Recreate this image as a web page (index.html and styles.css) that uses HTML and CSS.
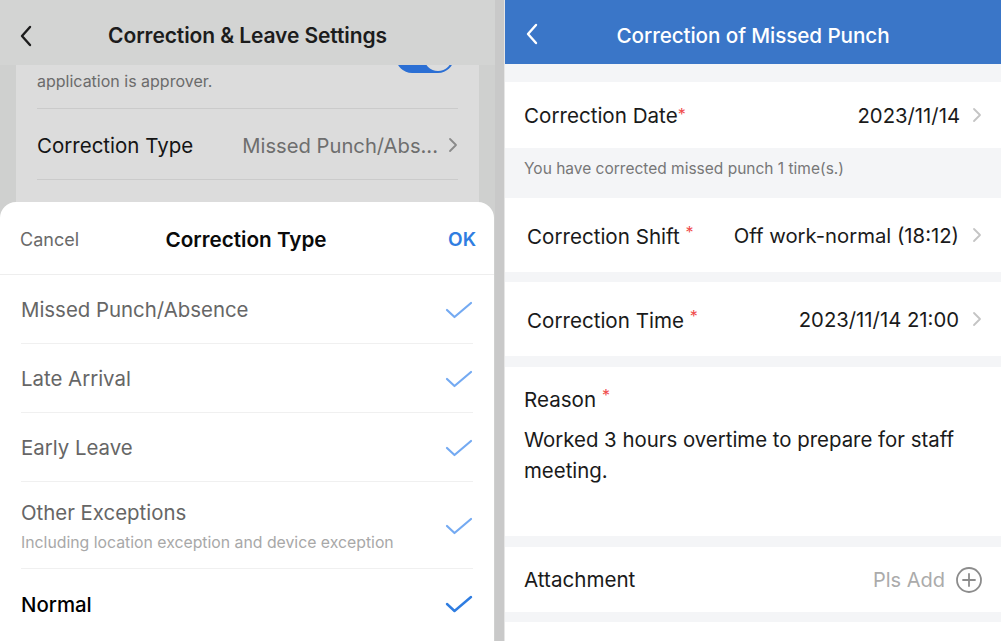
FILE: index.html
```html
<!DOCTYPE html>
<html lang="en">
<head>
  <meta charset="UTF-8">
  <meta name="viewport" content="width=device-width, initial-scale=1.0">
  <title>Correction of Missed Punch</title>
  <link rel="stylesheet" href="styles.css">
</head>
<body>
  <div class="screen settings-screen">
    <div class="nav-bar dim">
      <svg class="nav-back" width="14" height="22" viewBox="0 0 14 22"><path d="M11 2 L3 11 L11 20" fill="none" stroke="#1c1c1c" stroke-width="2.4" stroke-linecap="round" stroke-linejoin="round"/></svg>
      <div class="nav-title">Correction &amp; Leave Settings</div>
    </div>

    <div class="settings-body">
      <div class="settings-card">
        <div class="setting-row switch-row">
          <div class="setting-desc">
            <div class="desc-scrolled"></div>
            <div>application is approver.</div>
          </div>
          <div class="switch"><div class="switch-knob"></div></div>
        </div>
        <div class="setting-row link-row">
          <div class="setting-label">Correction Type</div>
          <div class="setting-value">Missed Punch/Abs...</div>
          <svg class="chevron" width="10" height="16" viewBox="0 0 10 16"><path d="M2 2 L8 8 L2 14" fill="none" stroke="#8a8a8a" stroke-width="1.8" stroke-linecap="round" stroke-linejoin="round"/></svg>
        </div>
        <div class="setting-row link-row"></div>
      </div>
    </div>

    <div class="sheet">
      <div class="sheet-head">
        <div class="sheet-cancel">Cancel</div>
        <div class="sheet-title">Correction Type</div>
        <div class="sheet-ok">OK</div>
      </div>
      <div class="option">
        <div class="option-text">Missed Punch/Absence</div>
        <svg class="check" width="28" height="18" viewBox="0 0 28 18"><path d="M2 9 L9.5 16 L26 2" fill="none" stroke="#74aaf2" stroke-width="2.2" stroke-linecap="round" stroke-linejoin="round"/></svg>
      </div>
      <div class="option">
        <div class="option-text">Late Arrival</div>
        <svg class="check" width="28" height="18" viewBox="0 0 28 18"><path d="M2 9 L9.5 16 L26 2" fill="none" stroke="#74aaf2" stroke-width="2.2" stroke-linecap="round" stroke-linejoin="round"/></svg>
      </div>
      <div class="option">
        <div class="option-text">Early Leave</div>
        <svg class="check" width="28" height="18" viewBox="0 0 28 18"><path d="M2 9 L9.5 16 L26 2" fill="none" stroke="#74aaf2" stroke-width="2.2" stroke-linecap="round" stroke-linejoin="round"/></svg>
      </div>
      <div class="option option-tall">
        <div class="option-text">
          <div>Other Exceptions</div>
          <div class="option-sub">Including location exception and device exception</div>
        </div>
        <svg class="check" width="28" height="18" viewBox="0 0 28 18"><path d="M2 9 L9.5 16 L26 2" fill="none" stroke="#74aaf2" stroke-width="2.2" stroke-linecap="round" stroke-linejoin="round"/></svg>
      </div>
      <div class="option option-last">
        <div class="option-text selected">Normal</div>
        <svg class="check" width="28" height="18" viewBox="0 0 28 18"><path d="M2 9 L9.5 16 L26 2" fill="none" stroke="#2f7de1" stroke-width="2.4" stroke-linecap="round" stroke-linejoin="round"/></svg>
      </div>
    </div>
  </div>

  <div class="gutter"></div>

  <div class="screen form-screen">
    <div class="nav-bar blue">
      <svg class="nav-back" width="14" height="22" viewBox="0 0 14 22"><path d="M11 2 L3 11 L11 20" fill="none" stroke="#ffffff" stroke-width="2.4" stroke-linecap="round" stroke-linejoin="round"/></svg>
      <div class="nav-title">Correction of Missed Punch</div>
    </div>

    <div class="form-row date-row">
      <div class="form-label">Correction Date<span class="req tight">*</span></div>
      <div class="form-value">2023/11/14</div>
      <svg class="chevron" width="10" height="16" viewBox="0 0 10 16"><path d="M2 2 L8 8 L2 14" fill="none" stroke="#c4c4c4" stroke-width="1.8" stroke-linecap="round" stroke-linejoin="round"/></svg>
    </div>
    <div class="form-note">You have corrected missed punch 1 time(s.)</div>

    <div class="form-row wide-row">
      <div class="form-label">Correction Shift <span class="req">*</span></div>
      <div class="form-value">Off work-normal (18:12)</div>
      <svg class="chevron" width="10" height="16" viewBox="0 0 10 16"><path d="M2 2 L8 8 L2 14" fill="none" stroke="#c4c4c4" stroke-width="1.8" stroke-linecap="round" stroke-linejoin="round"/></svg>
    </div>

    <div class="form-row wide-row gap-top">
      <div class="form-label">Correction Time <span class="req">*</span></div>
      <div class="form-value">2023/11/14 21:00</div>
      <svg class="chevron" width="10" height="16" viewBox="0 0 10 16"><path d="M2 2 L8 8 L2 14" fill="none" stroke="#c4c4c4" stroke-width="1.8" stroke-linecap="round" stroke-linejoin="round"/></svg>
    </div>

    <div class="reason-block">
      <div class="form-label">Reason <span class="req">*</span></div>
      <div class="reason-text">Worked 3 hours overtime to prepare for staff meeting.</div>
    </div>

    <div class="form-row attach-row">
      <div class="form-label">Attachment</div>
      <div class="form-placeholder">Pls Add</div>
      <svg class="plus" width="28" height="28" viewBox="0 0 28 28"><circle cx="14" cy="14" r="12" fill="none" stroke="#8c8c8c" stroke-width="1.8"/><path d="M14 8 V20 M8 14 H20" stroke="#8c8c8c" stroke-width="1.8" stroke-linecap="round"/></svg>
    </div>

    <div class="form-rest"></div>
  </div>
</body>
</html>
```

FILE: styles.css
```css
* {
  margin: 0;
  padding: 0;
  box-sizing: border-box;
  font-family: 'Inter', 'Noto Sans', sans-serif;
}

body {
  width: 1001px;
  height: 641px;
  overflow: hidden;
  display: flex;
  background: #ffffff;
}

.screen {
  height: 641px;
  display: flex;
  flex-direction: column;
  position: relative;
  overflow: hidden;
}

.settings-screen {
  width: 495px;
  background: #cfd0cf;
}

.gutter {
  width: 10px;
  background: #c9c9c9;
  border-right: 1px solid #e6e6e6;
}

.form-screen {
  flex: 1;
  background: #f4f5f7;
}

/* nav bars */
.nav-bar {
  height: 65px;
  flex-shrink: 0;
  display: flex;
  align-items: center;
  justify-content: center;
  padding-top: 6px;
  position: relative;
  z-index: 2;
}

.nav-bar.dim {
  background: #d3d4d3;
}

.nav-bar.blue {
  height: 64px;
  padding-top: 7px;
  background: #3a76c8;
}

.nav-back {
  position: absolute;
  left: 19px;
  top: 25px;
}

.nav-bar.blue .nav-back {
  left: 20px;
  top: 23px;
}

.nav-title {
  font-size: 21px;
  font-weight: 600;
  color: #1c1c1c;
  letter-spacing: -0.1px;
}

.nav-bar.blue .nav-title {
  font-weight: 500;
  color: #ffffff;
  font-size: 20.7px;
}

/* dimmed settings page, scrolled so the first line sits under the bar */
.settings-body {
  flex: 1;
  padding: 0 16px;
  overflow: hidden;
}

.settings-card {
  background: #dcdcdc;
  padding: 0 21px;
  margin-top: -27px;
}

.setting-row {
  display: flex;
  align-items: center;
  border-bottom: 1px solid #cbcbcb;
}

.switch-row {
  height: 71px;
  align-items: flex-start;
  padding-top: 4px;
}

.setting-desc {
  flex: 1;
  font-size: 16px;
  line-height: 26px;
  color: #6b6b6b;
}

.desc-scrolled {
  height: 26px;
}

.switch {
  width: 58px;
  height: 32px;
  margin-top: -1px;
  margin-right: 4px;
  border-radius: 16px;
  background: #2b6fd4;
  position: relative;
}

.switch-knob {
  position: absolute;
  right: 2px;
  top: 2px;
  width: 28px;
  height: 28px;
  border-radius: 50%;
  background: #dcdcdc;
}

.link-row {
  height: 71px;
  padding-top: 2px;
}

.setting-label {
  flex: 1;
  font-size: 20.5px;
  color: #141414;
}

.setting-value {
  font-size: 20.2px;
  color: #6e6e6e;
  margin-right: 10px;
}

/* bottom sheet */
.sheet {
  position: absolute;
  left: 0;
  top: 202px;
  width: 494px;
  bottom: 0;
  background: #ffffff;
  border-radius: 16px 16px 0 0;
  z-index: 3;
}

.sheet-head {
  height: 73px;
  display: flex;
  align-items: center;
  justify-content: space-between;
  padding: 2px 18px 0 20px;
  border-bottom: 1px solid #eeeeee;
}

.sheet-cancel {
  width: 80px;
  font-size: 18px;
  color: #6a6a6a;
}

.sheet-title {
  font-size: 20.7px;
  font-weight: 600;
  color: #0a0a0a;
  margin-left: -4px;
}

.sheet-ok {
  width: 80px;
  text-align: right;
  font-size: 19px;
  font-weight: 600;
  color: #2f7de1;
}

.option {
  height: 69px;
  margin: 0 21px;
  padding-top: 1px;
  display: flex;
  align-items: center;
  justify-content: space-between;
  border-bottom: 1px solid #f0f0f0;
}

.option-tall {
  height: 87px;
}

.option-last {
  border-bottom: none;
  padding-top: 0;
  height: 70px;
}

.option-text {
  font-size: 20.4px;
  color: #666666;
}

.option-text.selected {
  color: #000000;
  font-weight: 500;
}

.option-sub {
  font-size: 15.8px;
  color: #a8a8a8;
  margin-top: 8px;
}

/* form page */
.form-row {
  background: #ffffff;
  display: flex;
  align-items: center;
  padding: 0 19px 0 19px;
}

.date-row {
  margin-top: 18px;
  height: 66px;
}

.wide-row {
  height: 74px;
  padding-left: 22px;
}

.gap-top {
  margin-top: 10px;
}

.form-label {
  flex: 1;
  font-size: 20.6px;
  color: #1a1a1a;
}

.req {
  color: #f04b4b;
  font-size: 16px;
  vertical-align: 6px;
}

.req.tight {
  vertical-align: 3px;
}

.form-value {
  font-size: 20.3px;
  color: #1a1a1a;
  margin-right: 13px;
}

.date-row .form-value {
  margin-right: 12px;
}

.form-note {
  height: 50px;
  display: flex;
  align-items: flex-start;
  padding: 11px 0 0 19px;
  font-size: 15.5px;
  color: #777777;
}

.reason-block {
  margin-top: 11px;
  height: 169px;
  background: #ffffff;
  padding: 18px 19px 0 19px;
}

.reason-text {
  margin-top: 12px;
  font-size: 20.4px;
  line-height: 31px;
  color: #1a1a1a;
  padding-right: 20px;
}

.attach-row {
  margin-top: 11px;
  height: 65px;
}

.form-placeholder {
  font-size: 20px;
  color: #ababab;
  margin-right: 10px;
}

.plus {
  margin-right: -1px;
}

.form-rest {
  margin-top: 10px;
  flex: 1;
  background: #ffffff;
}
```
